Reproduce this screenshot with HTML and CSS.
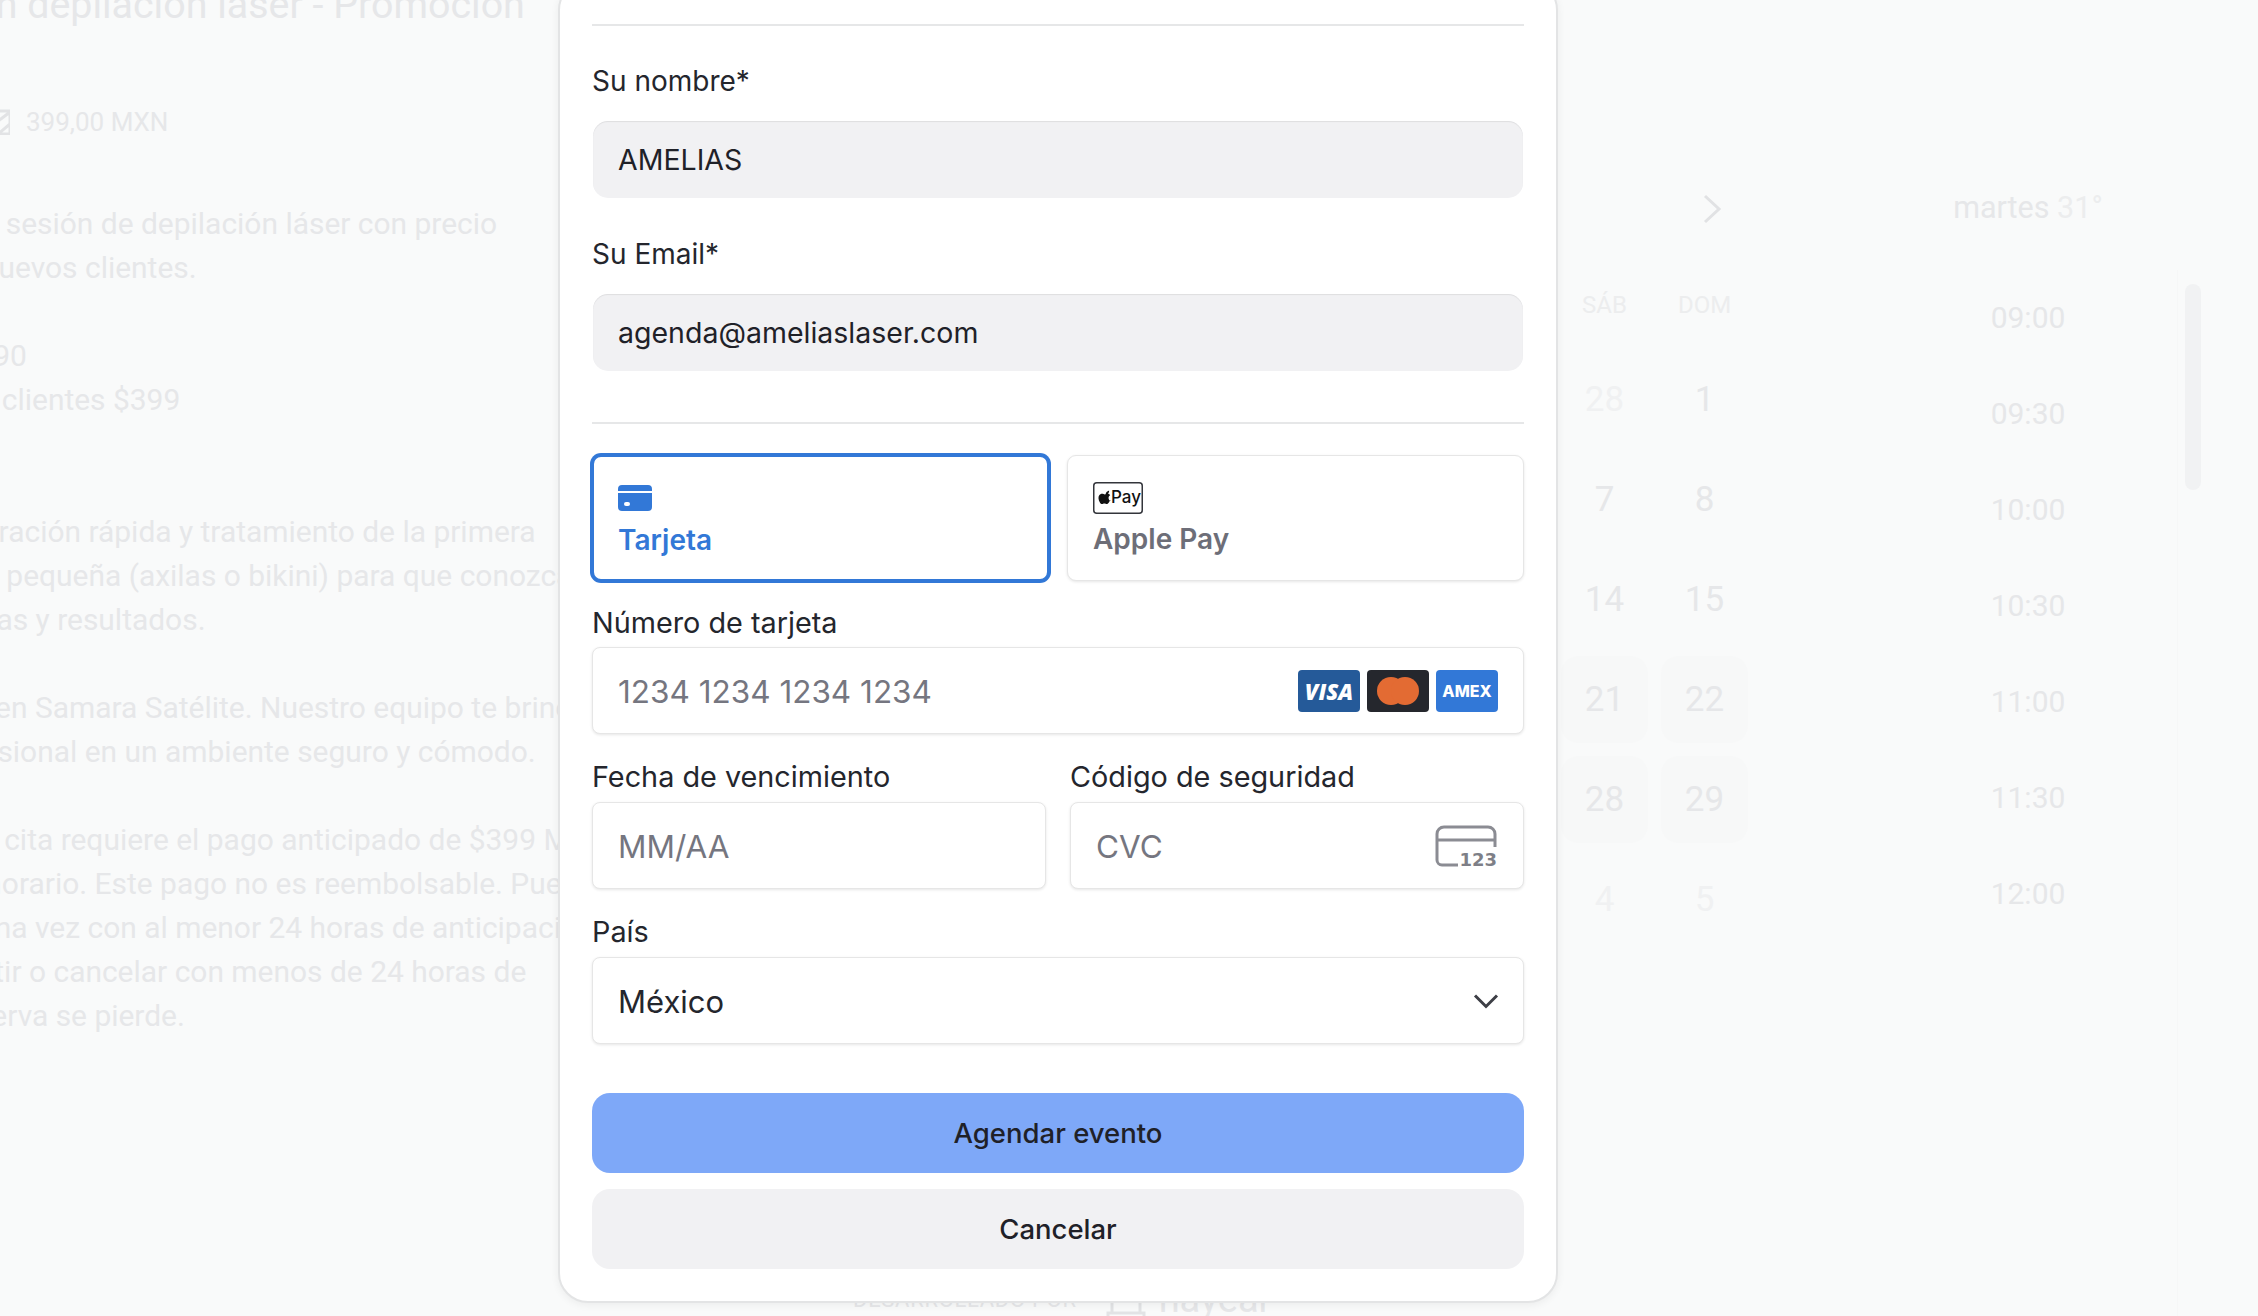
FILE: index.html
```html
<!DOCTYPE html>
<html lang="es">
<head>
<meta charset="utf-8">
<title>Agendar evento</title>
<link rel="stylesheet" href="styles.css">
</head>
<body>
<div class="page">
  <section class="left">
    <div class="left-inner">
      <h1 class="title">Sesión depilación láser - Promoción</h1>
      <div class="price"><svg class="price-icon" width="26" height="26" viewBox="0 0 26 26"><path d="M2 2h24v23H2zM26 3L14 12M14 25l12-10" fill="none" stroke="#e2e3e5" stroke-width="3"/></svg><span>399,00 MXN</span></div>
      <p class="para para-first">Primera sesión de depilación láser con precio<br>solo a nuevos clientes.</p>
      <p class="para">Este $790<br>Nuevos clientes $399</p>
      <p class="para para-gap"><span class="nudge">Su valoración rápida y tratamiento de la primera</span><br>Tu zona pequeña (axilas o bikini) para que conozcas<br>y técnicas y resultados.</p>
      <p class="para">Somos en Samara Satélite. Nuestro equipo te brinda<br>tu profesional en un ambiente seguro y cómodo.</p>
      <p class="para">Nota: la cita requiere el pago anticipado de $399 MXN<br>fijar tu horario. Este pago no es reembolsable. Puedes<br>Hazlo una vez con al menor 24 horas de anticipación.<br>No asistir o cancelar con menos de 24 horas de<br>Esa reserva se pierde.</p>
    </div>
  </section>
  <div class="center">
    <div class="credit"><span>DESARROLLADO POR</span><svg width="40" height="44" viewBox="0 0 40 44"><path d="M6 6h28v30H6zM12 14h16M2 36h36v6H2z" fill="none" stroke="#e2e3e5" stroke-width="3"/></svg><span class="brand">hayear</span></div>
  </div>
  <section class="right">
    <div class="calendar">
      <div class="cal-nav"><svg width="22" height="30" viewBox="0 0 22 30"><path d="M4 2l14 13L4 28" fill="none" stroke="#e1e2e4" stroke-width="3"/></svg></div>
      <div class="cal-grid">
        <div class="dow">SÁB</div><div class="dow">DOM</div>
        <div class="day faint">28</div><div class="day">1</div>
        <div class="day">7</div><div class="day">8</div>
        <div class="day">14</div><div class="day">15</div>
        <div class="day on">21</div><div class="day on">22</div>
        <div class="day on">28</div><div class="day on">29</div>
        <div class="day faint">4</div><div class="day faint">5</div>
      </div>
    </div>
    <div class="times">
      <div class="times-head">martes <span class="head-date">31°</span></div>
      <div class="slot">09:00</div>
      <div class="slot">09:30</div>
      <div class="slot">10:00</div>
      <div class="slot">10:30</div>
      <div class="slot">11:00</div>
      <div class="slot">11:30</div>
      <div class="slot">12:00</div>
    </div>
    <div class="scroll-track"><div class="scroll-thumb"></div></div>
  </section>
</div>

<form class="modal">
  <hr class="rule">
  <label class="label label-first">Su nombre*</label>
  <div class="filled">AMELIAS</div>
  <label class="label label-next">Su Email*</label>
  <div class="filled">agenda@ameliaslaser.com</div>
  <hr class="rule rule-mid">
  <div class="tabs">
    <div class="tab tab-on">
      <svg class="tab-icon" width="34" height="26" viewBox="0 0 34 26"><path fill="#3278d7" d="M4 0h26a4 4 0 0 1 4 4v2H0V4a4 4 0 0 1 4-4zM0 8h34v14a4 4 0 0 1-4 4H4a4 4 0 0 1-4-4z"/><rect x="6" y="17" width="6" height="4" rx="2" fill="#fff"/></svg>
      <span>Tarjeta</span>
    </div>
    <div class="tab">
      <svg class="tab-icon-ap" width="50" height="32" viewBox="0 0 50 32"><rect x=".75" y=".75" width="48.5" height="30.5" rx="3" fill="#fff" stroke="#33353b" stroke-width="1.5"/><path fill="#111" d="M15.2 11.4c-.7.8-1.700 1.300-2.500 1.200-.1-1 .4-2 .9-2.600.7-.7 1.800-1.300 2.500-1.300.1 1-.3 2-.9 2.700zm1.900 6.700c-.4 1-.6 1.400-1.100 2.200-.7 1.100-1.400 1.800-2.300 1.800-.9 0-1.200-.5-2.300-.5s-1.500.5-2.300.5c-.9 0-1.600-.8-2.200-1.700-1.600-2.500-1.800-5.400-.8-6.900.7-1.100 1.900-1.700 3-1.700s1.800.6 2.700.6 1.400-.6 2.700-.6c1 0 2 .5 2.700 1.400-2.400 1.300-2 4.700.4 5.900z"/><text x="18" y="21" class="ap-text">Pay</text></svg>
      <span>Apple Pay</span>
    </div>
  </div>
  <label class="label label-stripe-first">Número de tarjeta</label>
  <div class="stripe">
    <span class="ph">1234 1234 1234 1234</span>
    <div class="cards">
      <div class="card card-visa">VISA</div>
      <div class="card card-mc"><svg width="42" height="28" viewBox="0 0 42 28"><circle cx="14" cy="14" r="14" fill="#e36b33"/><circle cx="28" cy="14" r="14" fill="#e36b33"/></svg></div>
      <div class="card card-amex">AMEX</div>
    </div>
  </div>
  <div class="two">
    <div>
      <label class="label label-stripe">Fecha de vencimiento</label>
      <div class="stripe"><span class="ph">MM/AA</span></div>
    </div>
    <div>
      <label class="label label-stripe">Código de seguridad</label>
      <div class="stripe">
        <span class="ph">CVC</span>
        <svg class="cvc" width="62" height="42" viewBox="0 0 62 42"><path d="M60 22V9a7 7 0 0 0-7-7H9a7 7 0 0 0-7 7v26a5 5 0 0 0 5 5h16" fill="none" stroke="#8b8c93" stroke-width="3"/><path d="M2 15h58" stroke="#8b8c93" stroke-width="3"/><text x="62" y="41" text-anchor="end" class="cvc-text">123</text></svg>
      </div>
    </div>
  </div>
  <label class="label label-stripe">País</label>
  <div class="stripe">
    <span class="val">México</span>
    <svg class="chev" width="26" height="16" viewBox="0 0 26 16"><path d="M2 2.500l11 11 11-11" fill="none" stroke="#3d3f46" stroke-width="3"/></svg>
  </div>
  <button type="button" class="btn btn-primary">Agendar evento</button>
  <button type="button" class="btn btn-ghost">Cancelar</button>
</form>
</body>
</html>
```
FILE: styles.css
```css
* { box-sizing: border-box; }
html, body { margin: 0; height: 100%; }
body {
  background: #f9fafa;
  overflow: hidden;
  font-family: Inter, "Liberation Sans", sans-serif;
  color: #1f2128;
  position: relative;
}

/* dimmed page behind the dialog */
.page { display: flex; height: 1316px; font-family: Roboto, "Liberation Sans", sans-serif; color: #e6e7e9; }
.left { width: 559px; flex: none; overflow: hidden; }
.left-inner { margin-left: -106px; white-space: nowrap; }
.title { margin: -21px 0 0 5px; font-size: 39.400px; line-height: 52px; font-weight: 400; }
.price { display: flex; align-items: center; gap: 16px; margin-top: 73px; margin-left: 90px; font-size: 26px; line-height: 36px; }
.para { margin: 44px 0 0; font-size: 29.950px; line-height: 44px; }
.para-first { margin-top: 62px; }
.para-gap { margin-top: 88px; }
.nudge { margin-left: 8px; }
.center { width: 997px; flex: none; position: relative; }
.credit { position: absolute; left: 294px; bottom: -5px; display: flex; align-items: center; gap: 29px; font-size: 22px; letter-spacing: .7px; }
.brand { font-size: 38px; letter-spacing: 0; margin-left: -16px; }
.right { flex: 1; display: flex; position: relative; min-width: 0; }
.calendar { width: 195px; margin-left: 5px; flex: none; }
.cal-nav { height: 285px; display: flex; justify-content: flex-end; padding: 194px 33px 0 0; }
.cal-grid { display: grid; grid-template-columns: 87px 87px; grid-template-rows: 58px; grid-auto-rows: 87px; gap: 13px; }
.dow { text-align: center; font-size: 24px; line-height: 40px; color: #ecedee; }
.day { display: flex; align-items: center; justify-content: center; font-size: 35px; border-radius: 18px; }
.on { background: #f7f8f8; }
.faint { color: #f0f1f2; }
.times { margin-left: 153px; width: 238px; text-align: center; }
.times-head { margin-top: 188px; font-size: 30.500px; line-height: 40px; }
.head-date { color: #ecedee; }
.slot { height: 96px; line-height: 96px; font-size: 30px; }
.times-head + .slot { margin-top: 42px; }
.scroll-track { position: absolute; left: 621px; top: 270px; bottom: 0; width: 30px; border-left: 1px solid #f6f7f7; padding: 14px 0 0 7px; }
.scroll-thumb { width: 16px; height: 206px; border-radius: 8px; background: #f1f2f3; }

/* dialog */
.modal {
  position: absolute;
  left: 558px;
  top: -20px;
  width: 1000px;
  padding: 42px 32px 32px 32px;
  background: #fff;
  border: 2px solid #e3e4e5;
  border-radius: 30px;
  box-shadow: 0 2px 8px rgba(0, 0, 0, .06);
}
.rule { margin: 0; border: 0; height: 2px; background: #e6e7e8; }
.rule-mid { margin-top: 51px; margin-bottom: 31px; }
.label { display: block; font-size: 29px; line-height: 36px; color: #24262d; }
.label-first { margin-top: 37px; margin-bottom: 22px; font-size: 28px; }
.label-next { margin-top: 38px; margin-bottom: 22px; font-size: 28px; }
.label-stripe-first { margin-top: 24px; margin-bottom: 6px; font-size: 28.800px; }
.label-stripe { margin-top: 25px; margin-bottom: 7px; font-size: 28.800px; }
.filled {
  height: 77px;
  margin: 0 1px;
  display: flex;
  align-items: center;
  padding: 0 25px;
  background: #f1f1f3;
  border-radius: 15px;
  box-shadow: inset 0 1px 1px rgba(0, 0, 0, .08);
  font-size: 28.500px;
}
.tabs { display: grid; grid-template-columns: 1fr 1fr; gap: 18px; }
.tab {
  height: 126px;
  padding: 26px 25px 0;
  display: flex;
  flex-direction: column;
  border: 1px solid #e6e6e6;
  border-radius: 9px;
  background: #fff;
  box-shadow: 0 1px 3px rgba(0, 0, 0, .1);
  font-size: 28px;
  font-weight: 600;
  color: #6d6e78;
}
.tab-on { border: 2px solid #3278d7; box-shadow: 0 0 0 2px #3278d7; color: #3278d7; padding: 28px 24px 0; }
.tab-icon { margin-bottom: 10px; }
.tab-icon-ap { margin-bottom: 6px; }
.tab span { line-height: 38px; }
.ap-text { font: 500 17px Inter, "Liberation Sans", sans-serif; fill: #111; }
.stripe {
  height: 87px;
  display: flex;
  align-items: center;
  justify-content: space-between;
  padding: 2px 26px 0 25px;
  background: #fff;
  border: 1px solid #e6e6e6;
  border-radius: 8px;
  box-shadow: 0 1px 3px rgba(0, 0, 0, .1);
  font-size: 31.500px;
}
.ph { color: #757680; }
.val { color: #24262d; font-size: 31px; }
.cards { display: flex; gap: 7px; margin-right: -1px; margin-top: -2px; }
.card { width: 62px; height: 42px; border-radius: 4px; display: flex; align-items: center; justify-content: center; color: #fff; }
.card-visa { background: #255a99; font: italic 800 22px "Open Sans", Inter, sans-serif; }
.card-mc { background: #25272d; }
.card-amex { background: #3278d7; font: 800 16px Inter, sans-serif; }
.two { display: grid; grid-template-columns: 1fr 1fr; gap: 24px; }
.cvc { margin-top: -2px; }
.cvc-text { font: 700 18px "DejaVu Sans", sans-serif; fill: #7e7f87; stroke: #fff; stroke-width: 3px; paint-order: stroke; }
.chev { margin-right: -2px; margin-top: -2px; }
.btn {
  display: block;
  width: 100%;
  height: 80px;
  border: 0;
  border-radius: 18px;
  font: 500 27.500px Inter, "Liberation Sans", sans-serif;
  color: #1f2128;
}
.btn-primary { margin-top: 49px; background: #7ea8f8; }
.btn-ghost { margin-top: 16px; background: #f1f1f3; }
```
